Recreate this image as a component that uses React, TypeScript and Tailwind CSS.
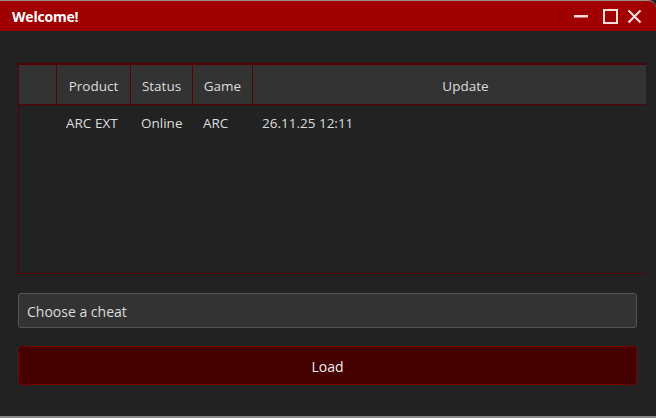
import React from "react";

const cols = "grid grid-cols-[38px_74px_62px_60px_1fr]";

export default function App() {
  return (
    <div
      className="w-[656px] h-[418px] bg-[#222222] flex flex-col overflow-hidden text-[13.5px] text-[#dddddd]"
      style={{ fontFamily: '"Open Sans", "Noto Sans", sans-serif' }}
    >
      <div className="h-[31px] shrink-0 bg-[#a00000] border-t border-[#9a8a8a] rounded-tr-[8px] flex items-center pl-[12px] pr-[14px]">
        <span className="font-bold text-white text-[14px] tracking-[-0.2px] mt-[1px]">Welcome!</span>
        <svg className="ml-auto" width="15" height="15" viewBox="0 0 15 15">
          <rect x="0" y="6" width="14" height="2.5" fill="#f4e0e0" />
        </svg>
        <svg className="ml-[14px]" width="15" height="15" viewBox="0 0 15 15">
          <rect x="1" y="1" width="13" height="13" fill="none" stroke="#f4e0e0" strokeWidth="2" />
        </svg>
        <svg className="ml-[9px]" width="15" height="15" viewBox="0 0 15 15">
          <path d="M1.5 1.5 L13.5 13.5 M13.5 1.5 L1.5 13.5" stroke="#f4e0e0" strokeWidth="2" />
        </svg>
      </div>

      <div className="flex-1 flex flex-col pl-[18px] pt-[32px]">
        <div className="w-[628px] h-[211px] border-t-2 border-l border-[#560000] flex flex-col">
          <div className={`${cols} h-[40px] shrink-0 bg-[#333333] border-b border-[#5a0000]`}>
            <div className="border-r border-[#5a0000]" />
            <div className="border-r border-[#5a0000] flex items-center justify-center pt-[3px]">Product</div>
            <div className="border-r border-[#5a0000] flex items-center justify-center pt-[3px]">Status</div>
            <div className="border-r border-[#5a0000] flex items-center justify-center pt-[3px]">Game</div>
            <div className="flex items-center justify-center pt-[3px] pl-[32px]">Update</div>
          </div>
          <div className={`${cols} h-[37px] shrink-0`}>
            <div />
            <div className="flex items-center pl-[9px]">ARC EXT</div>
            <div className="flex items-center pl-[10px]">Online</div>
            <div className="flex items-center pl-[10px]">ARC</div>
            <div className="flex items-center pl-[9px]">26.11.25 12:11</div>
          </div>
          <div className="flex-1" />
          <div className="h-[1px] shrink-0 bg-[#5a0000]" />
        </div>

        <div className="mt-[19px] w-[619px] h-[35px] bg-[#333333] border border-[#555555] rounded-[3px] flex items-center pl-[8px] pt-[2px] text-[14px]">
          Choose a cheat
        </div>

        <div className="mt-[18px] w-[619px] h-[39px] bg-[#450000] border border-[#7a0000] rounded-[4px] flex items-center justify-center text-[#eeeeee] pt-[2px] text-[14px]">
          Load
        </div>
      </div>
      <div className="h-[2px] shrink-0 bg-[#8a8a8a]" />
    </div>
  );
}
